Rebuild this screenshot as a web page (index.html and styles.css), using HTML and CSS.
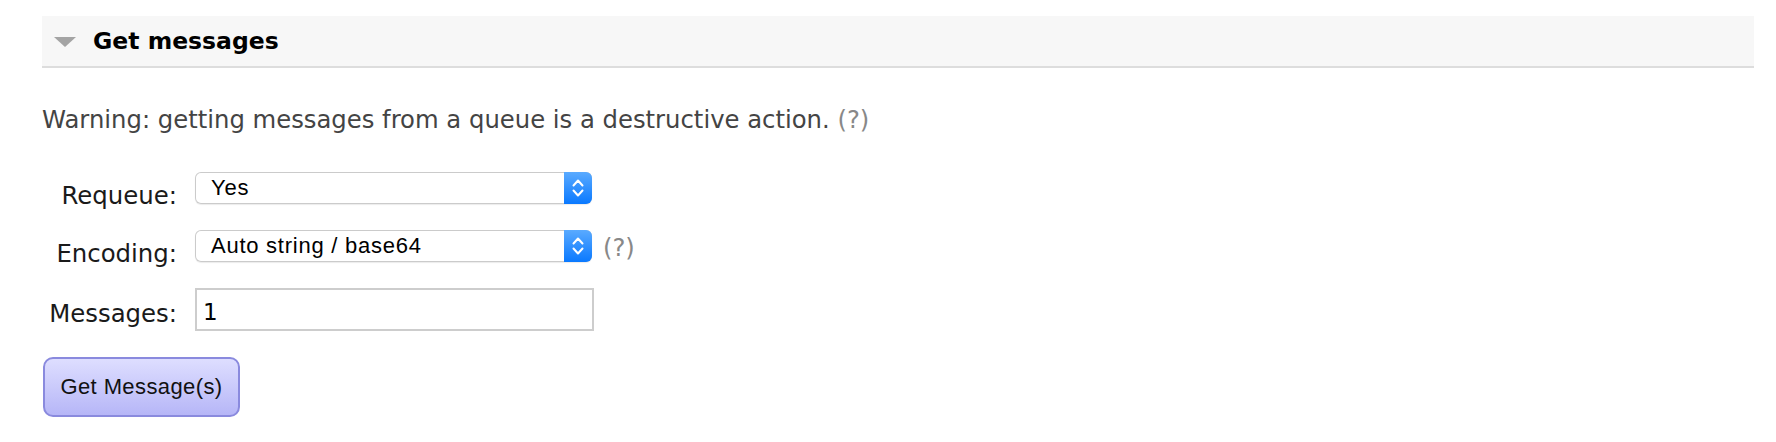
FILE: index.html
```html
<!DOCTYPE html>
<html lang="en">
<head>
<meta charset="utf-8">
<title>Get messages</title>
<link rel="stylesheet" href="styles.css">
</head>
<body>
<div class="page">
  <h2 class="section-head"><span class="tri"></span>Get messages</h2>
  <p class="warn">Warning: getting messages from a queue is a destructive action. <span class="help">(?)</span></p>
  <div class="form">
    <div class="row">
      <label class="lbl">Requeue:</label>
      <div class="select">
        <span class="sel-text">Yes</span>
        <span class="sel-btn"><svg width="12" height="20" viewBox="0 0 12 20"><polyline points="1.5,7.5 6,2.5 10.5,7.5" fill="none" stroke="#fff" stroke-width="2" stroke-linecap="round" stroke-linejoin="round"/><polyline points="1.5,12.5 6,17.5 10.5,12.5" fill="none" stroke="#fff" stroke-width="2" stroke-linecap="round" stroke-linejoin="round"/></svg></span>
      </div>
    </div>
    <div class="row">
      <label class="lbl">Encoding:</label>
      <div class="select">
        <span class="sel-text">Auto string / base64</span>
        <span class="sel-btn"><svg width="12" height="20" viewBox="0 0 12 20"><polyline points="1.5,7.5 6,2.5 10.5,7.5" fill="none" stroke="#fff" stroke-width="2" stroke-linecap="round" stroke-linejoin="round"/><polyline points="1.5,12.5 6,17.5 10.5,12.5" fill="none" stroke="#fff" stroke-width="2" stroke-linecap="round" stroke-linejoin="round"/></svg></span>
      </div>
      <span class="help help-side">(?)</span>
    </div>
    <div class="row">
      <label class="lbl lbl-input">Messages:</label>
      <input class="num" type="text" value="1">
    </div>
  </div>
  <button class="btn" type="button">Get Message(s)</button>
</div>
</body>
</html>
```
FILE: styles.css
```css
html, body {
  margin: 0;
  background: #fff;
}
body {
  font-family: "DejaVu Sans", Verdana, sans-serif;
}
.page {
  padding: 16px 22px 0 42px;
}
.section-head {
  margin: 0;
  height: 50px;
  background: #f7f7f7;
  border-bottom: 2px solid #dddddd;
  display: flex;
  align-items: center;
  font-size: 23.5px;
  font-weight: bold;
  color: #000;
}
.tri {
  width: 0;
  height: 0;
  border-left: 11px solid transparent;
  border-right: 11px solid transparent;
  border-top: 10px solid #a4a4a4;
  margin: 2px 17px 0 12px;
}
.warn {
  margin: 38px 0 0;
  font-size: 24.3px;
  line-height: 28px;
  color: #444;
}
.help {
  color: #888;
}
.form {
  margin-top: 38px;
  display: flex;
  flex-direction: column;
  gap: 26px;
}
.row {
  display: flex;
  align-items: flex-start;
}
.lbl {
  width: 135px;
  margin-right: 18px;
  text-align: right;
  font-size: 24.4px;
  line-height: 17px;
  padding-top: 15px;
  color: #1a1a1a;
}
.lbl-input {
  padding-top: 17px;
}
.select {
  width: 397px;
  height: 32px;
  display: flex;
  border-radius: 6px;
  overflow: hidden;
  background: #fff;
  box-shadow: inset 0 0 0 1px #cbcbcb, 0 1px 1px rgba(0, 0, 0, 0.08);
  font-family: "Liberation Sans", Arial, sans-serif;
  font-size: 22px;
  letter-spacing: 0.75px;
  color: #000;
}
.sel-text {
  flex: 1;
  padding-left: 16px;
  line-height: 32px;
}
.sel-btn {
  width: 28px;
  background: linear-gradient(#5aaaff, #0a79ff);
  display: flex;
  align-items: center;
  justify-content: center;
}
.help-side {
  margin-left: 11px;
  font-size: 24.3px;
  line-height: 28px;
  padding-top: 4px;
}
.num {
  width: 399px;
  height: 43px;
  box-sizing: border-box;
  margin: 0;
  border: 2px solid #cdcdcd;
  padding: 5px 0 0 6px;
  font-family: "DejaVu Sans", Verdana, sans-serif;
  font-size: 23px;
  color: #000;
  outline: none;
}
.btn {
  display: block;
  margin: 26px 0 0 1px;
  width: 197px;
  height: 60px;
  border: 2px solid #8a8ade;
  border-radius: 10px;
  background: linear-gradient(#dedeff, #b6b6f7);
  font-family: "Liberation Sans", Arial, sans-serif;
  font-size: 22px;
  letter-spacing: 0.4px;
  color: #111;
  padding: 0;
}
```
